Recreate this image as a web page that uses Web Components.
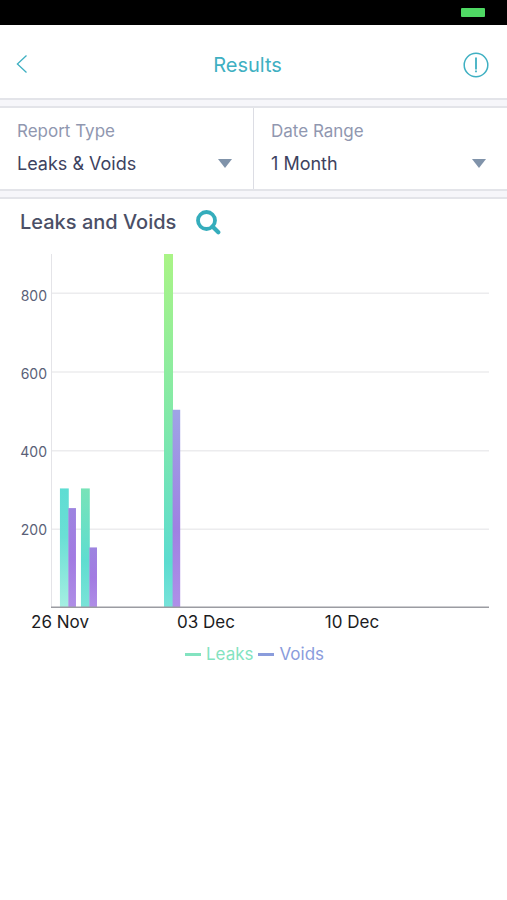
<!DOCTYPE html>
<html lang="en">
<head>
<meta charset="utf-8">
<meta name="viewport" content="width=device-width, initial-scale=1">
<title>Results</title>
<style>
  body {
    margin: 0;
    background: #fff;
    color: #3d4260;
    font-family: Inter, "Noto Sans", sans-serif;
  }
</style>
</head>
<body>

<results-page>
  <status-bar slot="status"></status-bar>
  <nav-header slot="header">Results</nav-header>
  <filter-select slot="filters" data-label="Report Type" data-options="Leaks &amp; Voids|Leaks|Voids"></filter-select>
  <filter-select slot="filters" data-label="Date Range" data-options="1 Month|3 Months|1 Year"></filter-select>
  <chart-card>
    <span slot="title">Leaks and Voids</span>
    <bar-chart></bar-chart>
    <chart-legend></chart-legend>
  </chart-card>
</results-page>

<script>
function attach(host, markup) {
  const template = document.createElement("template");
  template.innerHTML = markup;
  const root = host.attachShadow({ mode: "open" });
  root.appendChild(template.content.cloneNode(true));
  return root;
}

customElements.define("results-page", class ResultsPage extends HTMLElement {
  constructor() {
    super();
    attach(this, `
      <style>
        :host { display: block; }
        .band {
          padding: 6px 0;
          background: #f6f6fa;
          border-top: 2px solid #e3e4e9;
          border-bottom: 2px solid #e3e4e9;
        }
        /* the 1px gap lets the background through as the divider */
        .filters {
          display: grid;
          grid-template-columns: 1fr 1fr;
          column-gap: 1px;
          background: #dcdde4;
          border-top: 2px solid #e3e4e9;
          border-bottom: 2px solid #e3e4e9;
        }
      </style>
      <slot name="status"></slot>
      <slot name="header"></slot>
      <div class="band"><div class="filters"><slot name="filters"></slot></div></div>
      <main><slot></slot></main>`);
  }
});

customElements.define("status-bar", class StatusBar extends HTMLElement {
  constructor() {
    super();
    attach(this, `
      <style>
        :host {
          display: flex;
          justify-content: flex-end;
          align-items: center;
          height: 25px;
          padding: 0 22px;
          background: #000;
        }
        .battery { width: 24px; height: 9px; border-radius: 1px; background: #4fd964; }
      </style>
      <div class="battery"></div>`);
  }
});

customElements.define("nav-header", class NavHeader extends HTMLElement {
  constructor() {
    super();
    attach(this, `
      <style>
        :host {
          display: grid;
          grid-template-columns: 48px 1fr 48px;
          align-items: center;
          height: 73px;
          padding: 0 12px 0 0;
          color: #3fb0c2;
        }
        h1 { margin: 0; padding: 6px 0 0; text-align: center; font-size: 20px; font-weight: 400; line-height: 26px; }
        button { display: flex; margin: 0; border: 0; background: none; color: inherit; }
        .back { padding: 4px 16px 0; }
        .info { justify-content: flex-end; padding: 6px 6px 0; }
        svg { display: block; fill: none; stroke: currentColor; }
      </style>
      <button class="back" aria-label="Back">
        <svg width="12" height="18" viewBox="0 0 12 18" stroke-width="1.3"><path d="M10.5 .6 1.4 9l9.1 8.4"/></svg>
      </button>
      <h1><slot></slot></h1>
      <button class="info" aria-label="Information">
        <svg width="26" height="26" viewBox="0 0 26 26" stroke-width="1.5">
          <circle cx="13" cy="13" r="11.8"/>
          <path d="M13 5.5v12M13 18.6v1.6" stroke-width="1.8"/>
        </svg>
      </button>`);
  }
});

customElements.define("filter-select", class FilterSelect extends HTMLElement {
  constructor() {
    super();
    this.root = attach(this, `
      <style>
        :host { display: block; padding: 10px 21px 11px 17px; background: #fff; }
        label { display: block; color: #9097b0; font-size: 17px; line-height: 26px; }
        .field { display: grid; align-items: center; margin-top: 5px; }
        select, svg { grid-area: 1 / 1; }
        select {
          appearance: none;
          width: 100%;
          height: 29px;
          margin: 0;
          padding: 0;
          border: 0;
          background: none;
          color: #3d4260;
          font: inherit;
          font-size: 18px;
        }
        svg { justify-self: end; fill: #8093aa; pointer-events: none; }
      </style>
      <label for="choice"></label>
      <div class="field">
        <select id="choice"></select>
        <svg width="14" height="9" viewBox="0 0 14 9"><path d="M0 0h14L7 9z"/></svg>
      </div>`);
  }

  connectedCallback() {
    this.root.querySelector("label").textContent = this.dataset.label;
    const select = this.root.querySelector("select");
    select.replaceChildren(...this.dataset.options.split("|").map(text => new Option(text)));
  }
});

customElements.define("chart-card", class ChartCard extends HTMLElement {
  constructor() {
    super();
    attach(this, `
      <style>
        :host { display: block; padding: 8px 18px 24px 20px; }
        header { display: flex; align-items: center; gap: 20px; height: 30px; }
        h2 { margin: 0; font-size: 20px; font-weight: 500; line-height: 26px; color: #4b4f66; }
        button { margin: 0; padding: 0; border: 0; background: none; color: #35adbc; }
        svg { display: block; fill: none; stroke: currentColor; }
      </style>
      <header>
        <h2><slot name="title"></slot></h2>
        <button aria-label="Search">
          <svg width="25" height="25" viewBox="0 0 25 25">
            <circle cx="10.5" cy="10.5" r="8.5" stroke-width="3.8"/>
            <path d="m16.5 16.5 5.8 5.8" stroke-width="4.2" stroke-linecap="round"/>
          </svg>
        </button>
      </header>
      <slot></slot>`);
  }
});

const MAX = 900;
const TICKS = [800, 600, 400, 200];
const DATES = ["26 Nov", "03 Dec", "10 Dec"];
// at: start of the pair, in percent of the plot's width
const DAYS = [
  { at: 2, leaks: 304, voids: 254, leaksFill: "aqua", voidsFill: "violet" },
  { at: 6.8, leaks: 304, voids: 154, leaksFill: "mint", voidsFill: "violet" },
  { at: 25.8, leaks: 900, voids: 504, leaksFill: "lime", voidsFill: "iris" }
];

customElements.define("bar-chart", class BarChart extends HTMLElement {
  constructor() {
    super();
    const percent = value => value / MAX * 100;
    const lines = TICKS.map(t =>
      `<line class="grid" x1="0" x2="100%" y1="${100 - percent(t)}%" y2="${100 - percent(t)}%"/>`).join("");
    const bar = (dx, width, value, fill) =>
      `<rect x="${dx}" y="${100 - percent(value)}%" width="${width}" height="${percent(value)}%" fill="url(#${fill})"/>`;
    const bars = DAYS.map(d => `
      <svg class="day" x="${d.at}%">
        ${bar(0, 9, d.leaks, d.leaksFill)}
        ${bar(8.6, 7.6, d.voids, d.voidsFill)}
      </svg>`).join("");

    attach(this, `
      <style>
        :host {
          display: grid;
          grid-template-columns: 27px 1fr;
          column-gap: 4px;
          margin-top: 17px;
        }
        .ticks { display: flex; flex-direction: column; padding-top: 3px; font-size: 14px; line-height: 18px; color: #5a5f78; }
        .ticks span { flex: 2; display: flex; align-items: center; justify-content: flex-end; }
        .ticks::after { content: ""; flex: 1; }
        .plot { display: block; width: 100%; height: 354px; }
        .grid { stroke: #ececee; stroke-width: 1.5; }
        .axis { stroke: #e4e4e8; stroke-width: 2; }
        .base { stroke: #9b9ca2; stroke-width: 3; }
        .dates {
          grid-column: 1 / -1;
          display: grid;
          grid-template-columns: repeat(3, 1fr);
          margin-left: -33px;
          padding-right: 64px;
          color: #1c1c1e;
          font-size: 17px;
          line-height: 28px;
          text-align: center;
        }
      </style>
      <div class="ticks">${TICKS.map(t => `<span>${t}</span>`).join("")}</div>
      <svg class="plot" role="img" aria-label="Leaks and voids per day">
        <defs>
          <linearGradient id="aqua" x2="0" y2="1"><stop stop-color="#5eddd3"/><stop offset=".4" stop-color="#6adfd5"/><stop offset="1" stop-color="#a6efe2"/></linearGradient>
          <linearGradient id="mint" x2="0" y2="1"><stop stop-color="#78e3b8"/><stop offset=".6" stop-color="#5eddd0"/><stop offset="1" stop-color="#7be3d8"/></linearGradient>
          <linearGradient id="lime" x2="0" y2="1"><stop stop-color="#aaf486"/><stop offset=".5" stop-color="#7ee8ac"/><stop offset=".87" stop-color="#5cdcd0"/><stop offset="1" stop-color="#78e3da"/></linearGradient>
          <linearGradient id="violet" x2="0" y2="1"><stop stop-color="#9d84e0"/><stop offset=".5" stop-color="#a27be2"/><stop offset="1" stop-color="#af8ee6"/></linearGradient>
          <linearGradient id="iris" x2="0" y2="1"><stop stop-color="#9fa4e6"/><stop offset=".6" stop-color="#a080e2"/><stop offset="1" stop-color="#af90e8"/></linearGradient>
        </defs>
        ${lines}
        <line class="axis" x1="0" x2="0" y1="0" y2="100%"/>
        ${bars}
        <line class="base" x1="0" x2="100%" y1="100%" y2="100%"/>
      </svg>
      <div class="dates">${DATES.map(d => `<span>${d}</span>`).join("")}</div>`);
  }
});

customElements.define("chart-legend", class ChartLegend extends HTMLElement {
  constructor() {
    super();
    attach(this, `
      <style>
        :host { display: flex; justify-content: center; gap: 5px; margin-top: 6px; font-size: 17px; line-height: 24px; }
        span { display: flex; align-items: center; gap: 5px; }
        span::before { content: ""; width: 16px; height: 3px; background: currentColor; }
        .leaks { color: #83e3c0; }
        .voids { color: #8a9cdc; }
      </style>
      <span class="leaks">Leaks</span>
      <span class="voids">Voids</span>`);
  }
});
</script>
</body>
</html>
